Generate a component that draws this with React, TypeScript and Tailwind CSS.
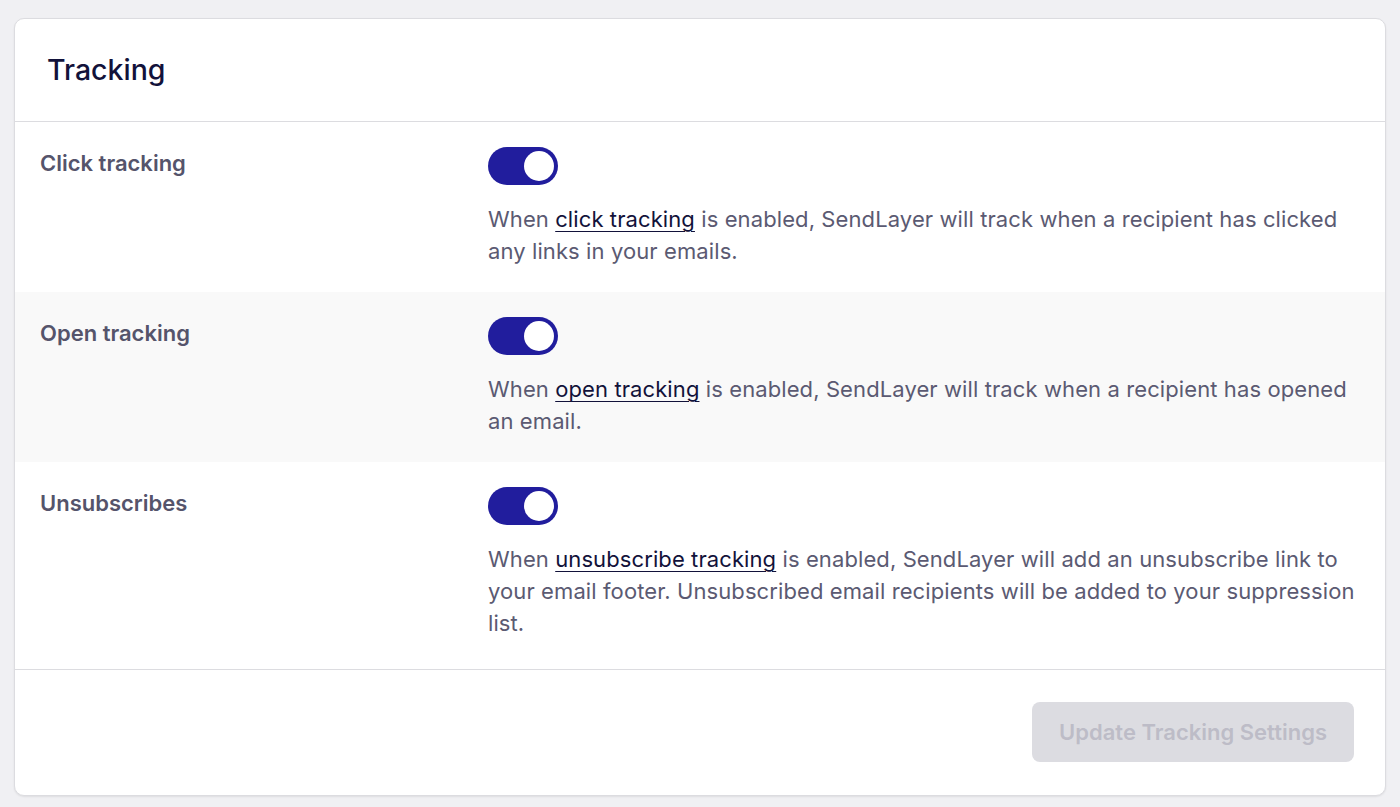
import { useState } from "react";

type Setting = {
  id: string;
  label: string;
  before: string;
  link: string;
  after: string;
};

const settings: Setting[] = [
  {
    id: "click",
    label: "Click tracking",
    before: "When ",
    link: "click tracking",
    after:
      " is enabled, SendLayer will track when a recipient has clicked any links in your emails.",
  },
  {
    id: "open",
    label: "Open tracking",
    before: "When ",
    link: "open tracking",
    after: " is enabled, SendLayer will track when a recipient has opened an email.",
  },
  {
    id: "unsub",
    label: "Unsubscribes",
    before: "When ",
    link: "unsubscribe tracking",
    after:
      " is enabled, SendLayer will add an unsubscribe link to your email footer. Unsubscribed email recipients will be added to your suppression list.",
  },
];

function Toggle({ on, onClick }: { on: boolean; onClick: () => void }) {
  return (
    <button
      onClick={onClick}
      aria-pressed={on}
      className={`flex items-center w-[70px] h-[38px] rounded-full px-[4px] ${
        on ? "bg-[#211d9d] justify-end" : "bg-[#d4d4da] justify-start"
      }`}
    >
      <span className="block w-[30px] h-[30px] rounded-full bg-white" />
    </button>
  );
}

export default function App() {
  const [state, setState] = useState<Record<string, boolean>>({
    click: true,
    open: true,
    unsub: true,
  });

  return (
    <div
      className="min-h-screen bg-[#f0f0f3] px-[14px] pt-[18px] pb-[12px]"
      style={{ fontFamily: "Inter, 'Liberation Sans', sans-serif" }}
    >
      <div className="bg-white rounded-[10px] border border-[#dcdce0] shadow-[0_1px_2px_rgba(0,0,0,0.08)] overflow-hidden">
        <div className="h-[103px] flex items-center px-[32px] border-b border-[#dcdce0]">
          <h1 className="text-[28.5px] font-medium text-[#12123a]">Tracking</h1>
        </div>

        {settings.map((s, i) => (
          <div
            key={s.id}
            className={`flex px-[25px] pt-[25px] ${
              i === 2 ? "pb-[30px]" : "pb-[25px]"
            } ${i === 1 ? "bg-[#f9f9f9]" : "bg-white"}`}
          >
            <div className="w-[448px] shrink-0 text-[22px] leading-[32px] font-semibold text-[#55546b]">
              {s.label}
            </div>
            <div className="flex-1 pr-[4px]">
              <Toggle
                on={state[s.id]}
                onClick={() => setState({ ...state, [s.id]: !state[s.id] })}
              />
              <p className="mt-[18px] text-[22px] leading-[32px] tracking-[0.1px] text-[#5b5a72]">
                {s.before}
                <a
                  href="#"
                  className="underline text-[#12123a] underline-offset-[4px] decoration-1"
                >
                  {s.link}
                </a>
                {s.after}
              </p>
            </div>
          </div>
        ))}

        <div className="border-t border-[#dcdce0] h-[126px] flex items-start justify-end pt-[32px] px-[31px]">
          <button
            disabled
            className="h-[60px] px-[27px] rounded-[8px] bg-[#dcdce1] text-[#bdbcc7] text-[22px] font-semibold"
          >
            Update Tracking Settings
          </button>
        </div>
      </div>
    </div>
  );
}
